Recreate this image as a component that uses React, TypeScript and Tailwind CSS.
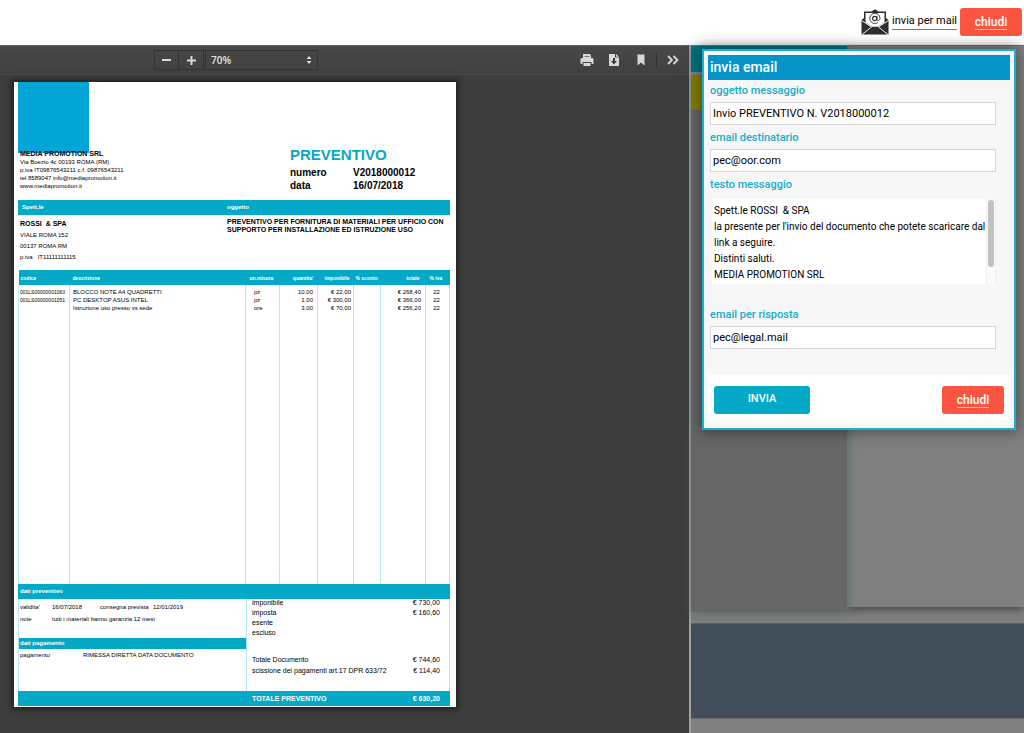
import React, { useState } from 'react';

const rows = [
  { code: '001LS00000001063', name: 'BLOCCO NOTE A4 QUADRETTI', unit: 'pz', qty: '10,00', price: '€ 22,00', total: '€ 268,40', vat: '22' },
  { code: '001LS00000001051', name: 'PC DESKTOP ASUS INTEL', unit: 'pz', qty: '1,00', price: '€ 300,00', total: '€ 366,00', vat: '22' },
  { code: '', name: 'Istruzione uso presso vs sede', unit: 'ore', qty: '3,00', price: '€ 70,00', total: '€ 256,20', vat: '22' },
];

const totals = [
  { label: 'imponibile', value: '€ 730,00' },
  { label: 'imposta', value: '€ 160,60' },
  { label: 'esente', value: '' },
  { label: 'escluso', value: '' },
];

const finalTotals = [
  { label: 'Totale Documento', value: '€ 744,60' },
  { label: 'scissione dei pagamenti art.17 DPR 633/72', value: '€ 114,40' },
];

const message = `Spett.le ROSSI  & SPA
la presente per l'invio del documento che potete scaricare dal link a seguire.
Distinti saluti.
MEDIA PROMOTION SRL`;

function MailIcon() {
  return (
    <svg viewBox="0 0 28 26" className="h-[26px] w-7" aria-hidden="true">
      <path d="M3 2.5h7.500L14 .2l3.500 2.300H25V9l2.500 2v14.500H.5V11L3 9z" fill="#2d2d2d" />
      <path d="M4.500 4h19v9.500L17 17.800h-6l-6.500-4.300z" fill="#fff" />
      <path d="M.5 11.500 10.500 18 1 25.500M27.500 11.500 17.500 18l9.500 7.500" fill="none" stroke="#fff" strokeWidth="0.9" />
      <circle cx="13.700" cy="9.500" r="2.100" fill="none" stroke="#2d2d2d" strokeWidth="1.100" />
      <path d="M16 7.200v3c0 2 3 1.500 3-1A5.100 5.100 0 1 0 16.800 13.600" fill="none" stroke="#2d2d2d" strokeWidth="0.900" />
    </svg>
  );
}

function PrintIcon() {
  return (
    <svg viewBox="0 0 14 14" className="h-3.5 w-3.5" aria-hidden="true">
      <path d="M3 1h7l1 1.500V5H3z" fill="#d8d8d8" />
      <path d="M1.500 5h11l1 1V11h-2V9h-9v2h-2V6z" fill="#d8d8d8" />
      <path d="M3.500 10h7v3h-7z" fill="#d8d8d8" />
      <path d="M4.500 3.500h5" stroke="#777" />
    </svg>
  );
}

function DownloadIcon() {
  return (
    <svg viewBox="0 0 12 14" className="h-3.5 w-3" aria-hidden="true">
      <path d="M1 1h6v3.500h4V13H1zM8 1l3 2.700H8z" fill="#d8d8d8" />
      <path d="M5 5h2v3h2l-3 3.500L3 8h2z" fill="#3a3a3a" />
    </svg>
  );
}

function CloseButton() {
  return (
    <button type="button" className="h-7 w-[62px] rounded-[3px] bg-[#fb5541] text-[12px] font-medium leading-4 text-white">
      <span className="border-b border-white/60">chiudi</span>
    </button>
  );
}

function Toolbar() {
  return (
    <div className="flex h-[29px] items-center border-b border-[#4a4a4a] bg-gradient-to-b from-[#484848] to-[#404040] pl-[154px] pr-1">
      <div className="flex h-5 border border-[#333] text-[#d8d8d8]">
        <button type="button" aria-label="Riduci" className="grid w-6 place-items-center border-r border-[#333]">
          <span className="h-[2px] w-[9px] bg-[#d8d8d8]" />
        </button>
        <button type="button" aria-label="Ingrandisci" className="grid w-6 place-items-center">
          <svg viewBox="0 0 9 9" className="h-[9px] w-[9px]">
            <path d="M4.500 0v9M0 4.500h9" stroke="#d8d8d8" strokeWidth="2" />
          </svg>
        </button>
      </div>
      <div className="relative ml-px">
        <select aria-label="Zoom" className="block h-5 w-[113px] appearance-none border border-[#333] bg-[#444] pl-[5px] font-['Open_Sans',sans-serif] text-[10px] font-semibold leading-4 text-[#e2e2e2]">
          <option>70%</option>
        </select>
        <svg viewBox="0 0 6 8" className="pointer-events-none absolute right-1.5 top-1.5 h-2 w-1.5">
          <path d="M3 0l2.500 3h-5zM3 8L.5 5h5z" fill="#d8d8d8" />
        </svg>
      </div>
      <div className="ml-auto flex items-center">
        <button type="button" aria-label="Stampa" className="grid w-[27px] place-items-center"><PrintIcon /></button>
        <button type="button" aria-label="Scarica" className="grid w-[27px] place-items-center"><DownloadIcon /></button>
        <button type="button" aria-label="Segnalibro" className="grid w-[27px] place-items-center">
          <svg viewBox="0 0 8 12" className="h-3 w-2"><path d="M.5.5h7v11L4 8.500.5 11.500z" fill="#d8d8d8" /></svg>
        </button>
        <span className="ml-[2px] h-3.5 w-px bg-[#2e2e2e]" />
        <button type="button" aria-label="Strumenti" className="ml-1 grid w-6 place-items-center">
          <svg viewBox="0 0 12 10" className="h-2.5 w-3">
            <path d="M1 1l4 4-4 4M6.500 1l4 4-4 4" fill="none" stroke="#d8d8d8" strokeWidth="1.800" />
          </svg>
        </button>
      </div>
    </div>
  );
}

function ItemsTable() {
  return (
    <table className="w-full table-fixed border-collapse text-left text-[6px] leading-[8px]">
      <colgroup>
        <col className="w-[51px]" />
        <col />
        <col className="w-[34px]" />
        <col className="w-[38px]" />
        <col className="w-[36px]" />
        <col className="w-[27px]" />
        <col className="w-[45px]" />
        <col className="w-[24px]" />
      </colgroup>
      <thead>
        <tr className="h-[15px] whitespace-nowrap bg-[#03a9c7] text-[5px] text-white">
          <th className="pl-[2px]">codice</th>
          <th className="pl-[3px]">descrizione</th>
          <th className="pl-1">un.misura</th>
          <th className="pr-1 text-right">quantita'</th>
          <th className="pr-1 text-right">imponibile</th>
          <th className="pl-[2px]">% sconto</th>
          <th className="pr-[6px] text-right">totale</th>
          <th className="pl-1">% iva</th>
        </tr>
      </thead>
      <tbody className="[&_td]:border-x [&_td]:border-[#b5e8ef]">
        <tr className="h-[3px]">
          {Array.from({ length: 8 }).map((_, i) => <td key={i} />)}
        </tr>
        {rows.map((row) => (
          <tr key={row.name} className="h-[8px] whitespace-nowrap">
            <td className="pl-px text-[5px]">{row.code}</td>
            <td className="pl-[3px]">{row.name}</td>
            <td className="pl-2">{row.unit}</td>
            <td className="pr-1 text-right">{row.qty}</td>
            <td className="pr-[2px] text-right">{row.price}</td>
            <td />
            <td className="pr-1 text-right">{row.total}</td>
            <td className="pr-[2px] text-center">{row.vat}</td>
          </tr>
        ))}
        <tr className="h-[272px]">
          {Array.from({ length: 8 }).map((_, i) => <td key={i} />)}
        </tr>
      </tbody>
    </table>
  );
}

function Quote() {
  return (
    <article className="w-[442px] bg-white pb-px pl-1 pr-[6px] font-['Liberation_Sans',Arial,sans-serif] text-[6px] text-black shadow-[0_0_6px_2px_rgba(0,0,0,0.55)]">
      <header className="flex h-[118px]">
        <div className="w-[272px]">
          <div className="h-[71px] w-[71px] bg-[#02a5d6]" />
          <div className="relative -mt-[3px] pl-[2px] leading-[8px]">
            <h2 className="text-[7px] font-bold">MEDIA PROMOTION SRL</h2>
            <p>Via Boezio 4c 00193 ROMA (RM)</p>
            <p>p.iva IT09876543211 c.f. 09876543211</p>
            <p>tel 8589047 info@mediapromotion.it</p>
            <p>www.mediapromotion.it</p>
          </div>
        </div>
        <div className="pt-[62px] font-bold">
          <h1 className="text-[15px] leading-[22px] text-[#03a9c7]">PREVENTIVO</h1>
          <dl className="grid grid-cols-[63px_auto] text-[10px] leading-[13px]">
            <dt>numero</dt>
            <dd>V2018000012</dd>
            <dt>data</dt>
            <dd>16/07/2018</dd>
          </dl>
        </div>
      </header>

      <div className="grid grid-cols-[209px_1fr] bg-[#03a9c7] font-bold leading-[15px] text-white">
        <span className="pl-1">Spett.le</span>
        <span>oggetto</span>
      </div>
      <div className="grid h-[55px] grid-cols-[209px_1fr]">
        <div className="pl-[2px] pt-1 leading-[11px]">
          <p className="mb-[2px] whitespace-pre text-[7px] font-bold leading-[9px]">ROSSI  &amp; SPA</p>
          <p>VIALE ROMA 152</p>
          <p>00137 ROMA RM</p>
          <p className="whitespace-pre">p.iva   IT11111111115</p>
        </div>
        <p className="pt-[3px] text-[7px] font-bold leading-[8px]">
          PREVENTIVO PER FORNITURA DI MATERIALI PER UFFICIO CON<br />
          SUPPORTO PER INSTALLAZIONE ED ISTRUZIONE USO
        </p>
      </div>

      <ItemsTable />

      <h3 className="bg-[#03a9c7] pl-[2px] font-bold leading-[15px] text-white">dati preventivo</h3>
      <div className="grid h-[92px] grid-cols-[228px_1fr] border-x border-[#b5e8ef]">
        <section className="border-r border-[#b5e8ef]">
          <div className="h-[39px] pl-px pt-[2px] leading-[12px]">
            <div className="flex">
              <span className="w-8">validita'</span>
              <span className="w-12">16/07/2018</span>
              <span className="w-[53px]">consegna prevista</span>
              <span>12/01/2019</span>
            </div>
            <div className="flex">
              <span className="w-8">note</span>
              <span>tutti i materiali hanno garanzia 12 mesi</span>
            </div>
          </div>
          <h3 className="bg-[#03a9c7] pl-px font-bold leading-[11px] text-white">dati pagamento</h3>
          <div className="flex pl-px leading-[13px]">
            <span className="w-[63px]">pagamento</span>
            <span>RIMESSA DIRETTA DATA DOCUMENTO</span>
          </div>
        </section>
        <section className="pl-[5px] pr-[9px] text-[7px]">
          <div className="-mt-px h-[56px] leading-[10px]">
            {totals.map((t) => (
              <div key={t.label} className="flex justify-between"><span>{t.label}</span><span>{t.value}</span></div>
            ))}
          </div>
          <div className="leading-[11px]">
            {finalTotals.map((t) => (
              <div key={t.label} className="flex justify-between"><span>{t.label}</span><span>{t.value}</span></div>
            ))}
          </div>
        </section>
      </div>
      <div className="flex justify-between bg-[#03a9c7] pl-[234px] pr-[10px] text-[7px] font-bold leading-[15px] text-white">
        <span>TOTALE PREVENTIVO</span>
        <span>€ 630,20</span>
      </div>
    </article>
  );
}

const labelClass = 'block pl-[2px] text-[11px] font-medium leading-[22px] text-[#13aec9]';
const inputClass = 'ml-[2px] block h-[23px] w-[286px] border border-[#d6d6d6] bg-white px-[2px] text-[11px] text-black outline-none';

function MailDialog() {
  const [subject, setSubject] = useState('Invio PREVENTIVO N. V2018000012');
  const [recipient, setRecipient] = useState('pec@oor.com');
  const [body, setBody] = useState(message);
  const [reply, setReply] = useState('pec@legal.mail');

  return (
    <form className="absolute right-2 top-1 w-[314px] border-2 border-[#1bb0c9] bg-[#f7f7f7] p-1 shadow-[0_0_14px_2px_rgba(0,0,0,0.4)]">
      <h2 className="bg-[#0594c8] pl-[2px] text-[14px] font-medium leading-[25px] text-white">invia email</h2>
      <label htmlFor="subject" className={labelClass}>oggetto messaggio</label>
      <input id="subject" className={inputClass} value={subject} onChange={(e) => setSubject(e.target.value)} />
      <label htmlFor="recipient" className={labelClass + ' mt-[2px]'}>email destinatario</label>
      <input id="recipient" className={inputClass} value={recipient} onChange={(e) => setRecipient(e.target.value)} />
      <label htmlFor="body" className={labelClass + ' mt-[2px]'}>testo messaggio</label>
      <div className="ml-1 mt-[3px] flex h-[85px] w-[284px]">
        <textarea
          id="body"
          className="flex-1 resize-none overflow-hidden bg-white py-1 pl-[2px] text-[10px] leading-4 text-black outline-none"
          value={body}
          onChange={(e) => setBody(e.target.value)}
        />
        <div className="w-[10px] border-x border-[#efefef] bg-[#fbfbfb] px-px pt-px">
          <div className="h-[67px] rounded-full bg-[#c1c1c1]" />
        </div>
      </div>
      <label htmlFor="reply" className={labelClass + ' mt-5'}>email per risposta</label>
      <input id="reply" className={inputClass} value={reply} onChange={(e) => setReply(e.target.value)} />
      <div className="mt-[26px] flex h-[49px] items-center justify-between bg-white px-1.5">
        <button type="button" className="h-7 w-24 rounded-[3px] bg-[#03a9c7] text-[11px] font-medium text-white">INVIA</button>
        <CloseButton />
      </div>
    </form>
  );
}

export default function App() {
  return (
    <div className="flex min-h-screen flex-col bg-[#808080] font-['Roboto',sans-serif]">
      <header className="flex h-[45px] items-center justify-end bg-white pb-[2px] pr-[2px]">
        <MailIcon />
        <a href="#" className="mx-[3px] border-b border-[#777] text-[11px] leading-4 text-black">invia per mail</a>
        <CloseButton />
      </header>

      <div className="relative flex flex-1">
        <main className="min-w-0 flex-1 border-r-2 border-t border-r-[#a0a0a0] border-t-[#23777c] bg-[#3d3d3d]">
          <Toolbar />
          <div className="pb-[26px] pl-3.5 pt-[7px]">
            <Quote />
          </div>
        </main>

        {/* page dimmed behind the dialog */}
        <aside className="flex w-[333px] flex-col border-t border-[#777]">
          <div className="flex h-[577px] items-start">
            <div className="relative h-[566px] w-[156px] bg-[#666] shadow-[1px_3px_10px_rgba(70,95,95,0.6)]">
              <div className="h-[26px] bg-[#007382]" />
              <div className="h-[3px] bg-[#808080]" />
              <div className="h-[35px] bg-[#828000]" />
            </div>
            <div className="h-[561px] flex-1 bg-[#808080] shadow-[0_3px_8px_rgba(0,0,0,0.45)]" />
          </div>
          <div className="relative h-[95px] border-t border-[#606060] bg-[#414e59]" />
          <div className="flex-1 border-t border-[#6a6a6a]" />
        </aside>

        <MailDialog />
      </div>
    </div>
  );
}
